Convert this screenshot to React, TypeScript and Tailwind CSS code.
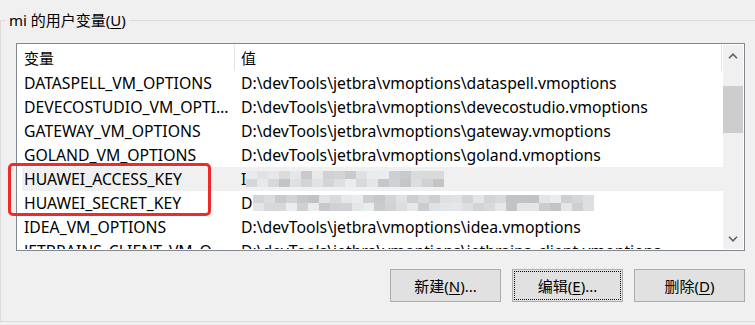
import React from "react";

type Row = {
  name: string;
  value?: string;
  lead?: string;
  masked?: number;
  hover?: boolean;
};

const rows: Row[] = [
  { name: "DATASPELL_VM_OPTIONS", value: "D:\\devTools\\jetbra\\vmoptions\\dataspell.vmoptions" },
  { name: "DEVECOSTUDIO_VM_OPTIONS", value: "D:\\devTools\\jetbra\\vmoptions\\devecostudio.vmoptions" },
  { name: "GATEWAY_VM_OPTIONS", value: "D:\\devTools\\jetbra\\vmoptions\\gateway.vmoptions" },
  { name: "GOLAND_VM_OPTIONS", value: "D:\\devTools\\jetbra\\vmoptions\\goland.vmoptions" },
  { name: "HUAWEI_ACCESS_KEY", lead: "I", masked: 18, hover: true },
  { name: "HUAWEI_SECRET_KEY", lead: "D", masked: 31 },
  { name: "IDEA_VM_OPTIONS", value: "D:\\devTools\\jetbra\\vmoptions\\idea.vmoptions" },
  { name: "JETBRAINS_CLIENT_VM_OPTIONS", value: "D:\\devTools\\jetbra\\vmoptions\\jetbrains_client.vmoptions" },
];

// pixelated block for the blurred secret values
function Mosaic({ count, seed }: { count: number; seed: number }) {
  let s = seed;
  const next = () => {
    s = (s * 9301 + 49297) % 233280;
    return s / 233280;
  };
  const shade = () => {
    const v = Math.round(192 + next() * 44);
    return `rgb(${v},${v + 1},${v + 3})`;
  };
  const top = Array.from({ length: count }, shade);
  const bottom = Array.from({ length: count }, shade);
  return (
    <div className="flex flex-col">
      <div className="flex">
        {top.map((c, i) => (
          <div key={i} className="w-[11px] h-[8px]" style={{ backgroundColor: c }} />
        ))}
      </div>
      <div className="flex">
        {bottom.map((c, i) => (
          <div key={i} className="w-[11px] h-[8px]" style={{ backgroundColor: c }} />
        ))}
      </div>
    </div>
  );
}

function Chevron({ down }: { down?: boolean }) {
  return (
    <svg width="10" height="6" viewBox="0 0 10 6" className={down ? "rotate-180" : ""}>
      <polyline points="1,5.2 5,1.2 9,5.2" fill="none" stroke="#606060" strokeWidth="1.6" />
    </svg>
  );
}

function Button({ label, hotkey, suffix, focused }: { label: string; hotkey: string; suffix: string; focused?: boolean }) {
  return (
    <button
      className={
        "w-[111px] h-[33px] border border-[#adadad] bg-[#e1e1e1] flex items-center justify-center " +
        (focused ? "outline-1 outline-dotted outline-black outline-offset-[-3px]" : "")
      }
    >
      {label}(<span className="underline underline-offset-2">{hotkey}</span>){suffix}
    </button>
  );
}

export default function App() {
  return (
    <div className="relative w-[755px] h-[325px] overflow-hidden bg-[#f0f0f0] pt-[10px] text-[15px] leading-[20px] text-black font-['Noto_Sans','Noto_Sans_CJK_SC',sans-serif]">
      <fieldset className="w-[770px] h-[312px] border border-[#dcdcdc]">
        <legend className="ml-[5px] px-[3px]">
          mi 的用户变量(<span className="underline underline-offset-2">U</span>)
        </legend>

        {/* list view */}
        <div className="ml-[15px] mt-[13px] w-[729px] h-[208px] border border-[#828790] bg-white p-px flex">
          <div className="w-[705px] h-full overflow-hidden">
            {/* header */}
            <div className="flex h-[26px]">
              <div className="w-[216px] pl-[6px] flex items-center">变量</div>
              <div className="w-px bg-[#e5e5e5]" />
              <div className="flex-1 pl-[6px] flex items-center">值</div>
              <div className="w-px bg-[#e5e5e5]" />
              <div className="w-px" />
            </div>

            {rows.map((row) => (
              <div
                key={row.name}
                className={"ml-[4px] flex h-[24px] items-center text-[15.75px] " + (row.hover ? "bg-[#f0f0f0]" : "")}
              >
                <div className="w-[213px] shrink-0 pl-[2px] pr-[4px] truncate">{row.name}</div>
                <div className="pl-[6px] flex items-center whitespace-nowrap">
                  {row.value ?? (
                    <>
                      <span>{row.lead}</span>
                      <Mosaic count={row.masked ?? 10} seed={row.masked ?? 1} />
                    </>
                  )}
                </div>
              </div>
            ))}
          </div>

          {/* scrollbar */}
          <div className="w-[20px] h-full bg-[#f0f0f0] flex flex-col">
            <div className="h-[21px] flex items-center justify-center">
              <Chevron />
            </div>
            <div className="h-[20px]" />
            <div className="h-[47px] bg-[#cdcdcd]" />
            <div className="flex-1" />
            <div className="h-[21px] flex items-center justify-center">
              <Chevron down />
            </div>
          </div>
        </div>

        {/* buttons */}
        <div className="ml-[15px] mt-[18px] w-[729px] flex justify-end gap-[11px]">
          <Button label="新建" hotkey="N" suffix="..." />
          <Button label="编辑" hotkey="E" suffix="..." focused />
          <Button label="删除" hotkey="D" suffix="" />
        </div>
      </fieldset>

      {/* red annotation box */}
      <div className="absolute left-[8px] top-[163px] w-[203px] h-[53px] border-[3px] border-[#ef2a2a] rounded-[5px]" />
    </div>
  );
}
